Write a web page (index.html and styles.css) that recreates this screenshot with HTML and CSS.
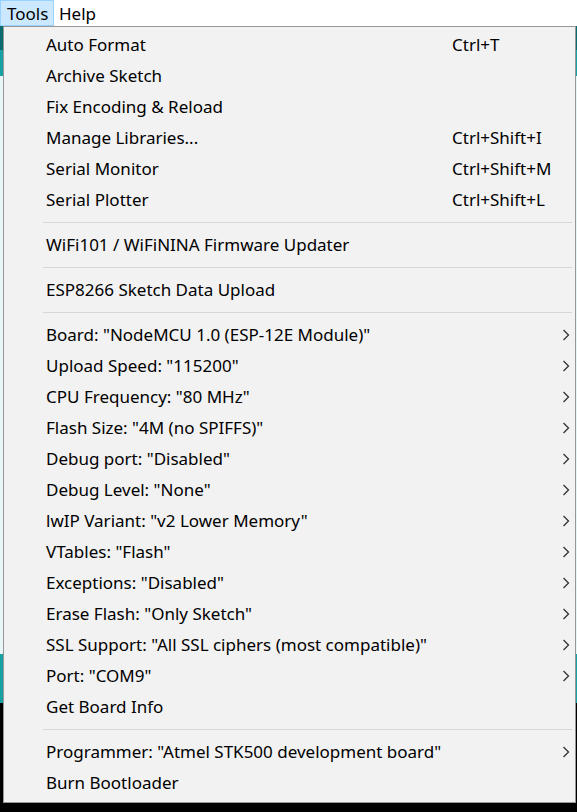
FILE: index.html
```html
<!DOCTYPE html>
<html>
<head>
<meta charset="utf-8">
<link rel="stylesheet" href="styles.css">
</head>
<body>
<div class="menubar">
  <span class="mb-item active">Tools</span>
  <span class="mb-item">Help</span>
</div>
<div class="backdrop">
  <div class="bd-teal-dark"></div>
  <div class="bd-teal"></div>
  <div class="bd-white"></div>
  <div class="bd-teal2"></div>
  <div class="bd-black"></div>
</div>
<div class="menu">
  <div class="item"><span class="label">Auto Format</span><span class="sc">Ctrl+T</span></div>
  <div class="item"><span class="label">Archive Sketch</span></div>
  <div class="item"><span class="label">Fix Encoding &amp; Reload</span></div>
  <div class="item"><span class="label">Manage Libraries...</span><span class="sc">Ctrl+Shift+I</span></div>
  <div class="item"><span class="label">Serial Monitor</span><span class="sc">Ctrl+Shift+M</span></div>
  <div class="item"><span class="label">Serial Plotter</span><span class="sc">Ctrl+Shift+L</span></div>
  <div class="sep"></div>
  <div class="item"><span class="label">WiFi101 / WiFiNINA Firmware Updater</span></div>
  <div class="sep"></div>
  <div class="item"><span class="label">ESP8266 Sketch Data Upload</span></div>
  <div class="sep"></div>
  <div class="item sub"><span class="label">Board: "NodeMCU 1.0 (ESP-12E Module)"</span><svg class="arr" viewBox="0 0 8 12"><path d="M1.5 1 L6.5 6 L1.5 11"/></svg></div>
  <div class="item sub"><span class="label">Upload Speed: "115200"</span><svg class="arr" viewBox="0 0 8 12"><path d="M1.5 1 L6.5 6 L1.5 11"/></svg></div>
  <div class="item sub"><span class="label">CPU Frequency: "80 MHz"</span><svg class="arr" viewBox="0 0 8 12"><path d="M1.5 1 L6.5 6 L1.5 11"/></svg></div>
  <div class="item sub"><span class="label">Flash Size: "4M (no SPIFFS)"</span><svg class="arr" viewBox="0 0 8 12"><path d="M1.5 1 L6.5 6 L1.5 11"/></svg></div>
  <div class="item sub"><span class="label">Debug port: "Disabled"</span><svg class="arr" viewBox="0 0 8 12"><path d="M1.5 1 L6.5 6 L1.5 11"/></svg></div>
  <div class="item sub"><span class="label">Debug Level: "None"</span><svg class="arr" viewBox="0 0 8 12"><path d="M1.5 1 L6.5 6 L1.5 11"/></svg></div>
  <div class="item sub"><span class="label">lwIP Variant: "v2 Lower Memory"</span><svg class="arr" viewBox="0 0 8 12"><path d="M1.5 1 L6.5 6 L1.5 11"/></svg></div>
  <div class="item sub"><span class="label">VTables: "Flash"</span><svg class="arr" viewBox="0 0 8 12"><path d="M1.5 1 L6.5 6 L1.5 11"/></svg></div>
  <div class="item sub"><span class="label">Exceptions: "Disabled"</span><svg class="arr" viewBox="0 0 8 12"><path d="M1.5 1 L6.5 6 L1.5 11"/></svg></div>
  <div class="item sub"><span class="label">Erase Flash: "Only Sketch"</span><svg class="arr" viewBox="0 0 8 12"><path d="M1.5 1 L6.5 6 L1.5 11"/></svg></div>
  <div class="item sub"><span class="label">SSL Support: "All SSL ciphers (most compatible)"</span><svg class="arr" viewBox="0 0 8 12"><path d="M1.5 1 L6.5 6 L1.5 11"/></svg></div>
  <div class="item sub"><span class="label">Port: "COM9"</span><svg class="arr" viewBox="0 0 8 12"><path d="M1.5 1 L6.5 6 L1.5 11"/></svg></div>
  <div class="item"><span class="label">Get Board Info</span></div>
  <div class="sep"></div>
  <div class="item sub"><span class="label">Programmer: "Atmel STK500 development board"</span><svg class="arr" viewBox="0 0 8 12"><path d="M1.5 1 L6.5 6 L1.5 11"/></svg></div>
  <div class="item"><span class="label">Burn Bootloader</span></div>
</div>
</body>
</html>
```

FILE: styles.css
```css
* { box-sizing: border-box; }
html, body { margin: 0; padding: 0; }
body {
  width: 577px;
  height: 812px;
  overflow: hidden;
  background: #000;
  font-family: "Noto Sans", "Open Sans", sans-serif;
  position: relative;
}
.menubar {
  height: 26px;
  background: #fff;
  display: flex;
  align-items: stretch;
  font-size: 17px;
  color: #000;
}
.mb-item {
  display: flex;
  align-items: center;
  padding: 0 4px 0 4px;
  border: 1px solid transparent;
}
.mb-item.active {
  background: #cce8ff;
  border-color: #99d1ff;
  width: 54px;
  padding-left: 6px;
}
.backdrop { display: flex; flex-direction: column; }
.bd-teal-dark { height: 24px; background: #0b6c70; }
.bd-teal { height: 26px; background: #17a1a5; }
.bd-white { height: 578px; background: #e8f6f6; }
.bd-teal2 { height: 49px; background: #17a1a5; }
.bd-black { height: 109px; background: #000; }

.menu {
  position: absolute;
  left: 3px;
  top: 26px;
  width: 573px;
  height: 777px;
  background: #f2f2f2;
  border: 1px solid #979797;
  padding-top: 2px;
  color: #000;
  font-size: 17px;
}
.item {
  height: 31px;
  display: flex;
  align-items: center;
  padding-left: 42px;
  white-space: nowrap;
}
.label { width: 406px; flex: none; }
.sc { flex: 1; }
.arr {
  width: 8px;
  height: 12px;
  margin-left: auto;
  margin-right: 5px;
  fill: none;
  stroke: #333;
  stroke-width: 1.3;
}
.sep {
  height: 14px;
  display: flex;
  align-items: center;
  padding-left: 39px;
  padding-right: 3px;
}
.sep::after {
  content: "";
  display: block;
  height: 1px;
  width: 100%;
  background: #d7d7d7;
}
```
